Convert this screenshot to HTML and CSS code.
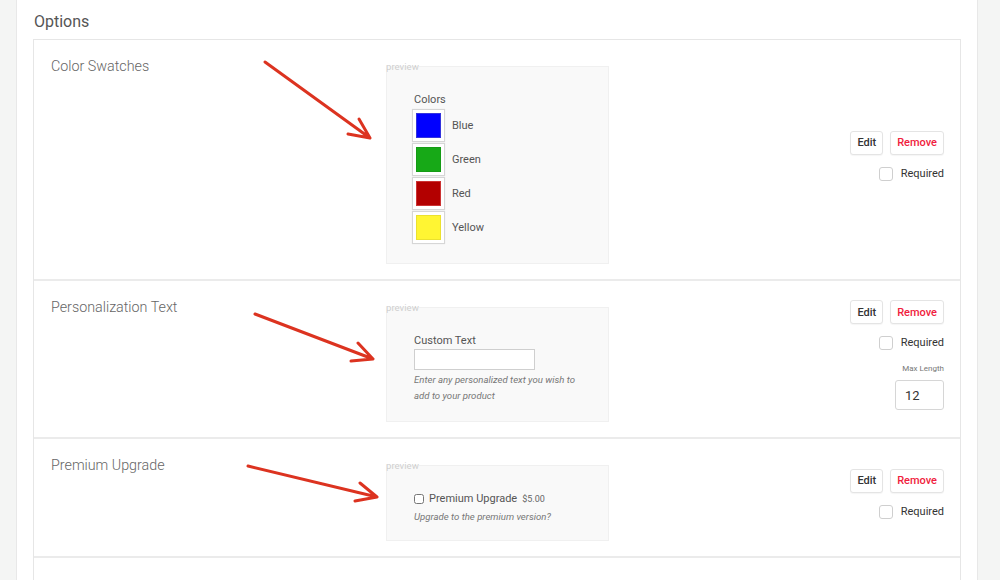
FILE: index.html
```html
<!DOCTYPE html>
<html lang="en">
<head>
    <meta charset="UTF-8">
    <title>Product Options</title>
    <link rel="stylesheet" href="styles.css">
</head>
<body>
    <div class="panel">
        <h2 class="panel-title">Options</h2>
        <div class="options-list">
            <!-- color swatches -->
            <div class="option-row">
                <div class="option-name">Color Swatches</div>
                <fieldset class="preview">
                    <legend>preview</legend>
                    <div class="field-label colors-label">Colors</div>
                    <div class="swatch-row">
                        <span class="swatch"><span class="swatch-fill blue"></span></span>
                        <span class="swatch-label">Blue</span>
                    </div>
                    <div class="swatch-row">
                        <span class="swatch"><span class="swatch-fill green"></span></span>
                        <span class="swatch-label">Green</span>
                    </div>
                    <div class="swatch-row">
                        <span class="swatch"><span class="swatch-fill red"></span></span>
                        <span class="swatch-label">Red</span>
                    </div>
                    <div class="swatch-row">
                        <span class="swatch"><span class="swatch-fill yellow"></span></span>
                        <span class="swatch-label">Yellow</span>
                    </div>
                </fieldset>
                <div class="option-actions">
                    <div class="btn-group">
                        <button class="btn">Edit</button>
                        <button class="btn btn-remove">Remove</button>
                    </div>
                    <label class="required"><span class="check-box"></span>Required</label>
                </div>
            </div>

            <!-- personalization -->
            <div class="option-row">
                <div class="option-name">Personalization Text</div>
                <fieldset class="preview">
                    <legend>preview</legend>
                    <div class="field-label">Custom Text</div>
                    <input type="text" class="text-input">
                    <p class="help-text">Enter any personalized text you wish to add to your product</p>
                </fieldset>
                <div class="option-actions">
                    <div class="btn-group">
                        <button class="btn">Edit</button>
                        <button class="btn btn-remove">Remove</button>
                    </div>
                    <label class="required"><span class="check-box"></span>Required</label>
                    <div class="max-length">
                        <span class="max-label">Max Length</span>
                        <input type="text" class="max-input" value="12">
                    </div>
                </div>
            </div>

            <!-- premium upgrade -->
            <div class="option-row">
                <div class="option-name">Premium Upgrade</div>
                <fieldset class="preview">
                    <legend>preview</legend>
                    <label class="upgrade-line">
                        <input type="checkbox" class="upgrade-check">
                        <span class="upgrade-name">Premium Upgrade</span>
                        <span class="upgrade-price">$5.00</span>
                    </label>
                    <p class="help-text upgrade-help">Upgrade to the premium version?</p>
                </fieldset>
                <div class="option-actions">
                    <div class="btn-group">
                        <button class="btn">Edit</button>
                        <button class="btn btn-remove">Remove</button>
                    </div>
                    <label class="required"><span class="check-box"></span>Required</label>
                </div>
            </div>

            <div class="option-row empty-row"></div>
        </div>
    </div>

    <svg class="arrows" width="1000" height="580" viewBox="0 0 1000 580">
        <g fill="none" stroke="#dc3320" stroke-width="3" stroke-linecap="round" stroke-linejoin="round">
            <path d="M265 62 L370 138 M359 119 L370 138 L348 134"/>
            <path d="M255 314 L373 359 M358 343 L373 359 L351 361"/>
            <path d="M248 466 L377 497 M360 483 L377 497 L355 501"/>
        </g>
    </svg>
</body>
</html>
```

FILE: styles.css
```css
body {
    font-family: Roboto, "Liberation Sans", sans-serif;
    background-color: #f4f5f4;
    margin: 0;
    padding: 0;
    color: #555;
    overflow: hidden;
}
.panel {
    background-color: white;
    margin: 0 22px 0 16px;
    border-left: 1px solid #e8e8e8;
    border-right: 1px solid #e8e8e8;
    padding: 0 16px 0 17px;
    min-height: 580px;
    box-sizing: border-box;
}
.panel-title {
    margin: 0;
    padding: 11px 0 7px;
    font-size: 16px;
    font-weight: 400;
    line-height: 21px;
    color: #555;
}
.options-list {
    border: 1px solid #e6e6e6;
    border-bottom: none;
    margin-left: -1px;
}
.option-row {
    display: grid;
    grid-template-columns: 335px 223px 1fr;
    padding: 16px 16px 15px 17px;
    border-bottom: 2px solid #ebebeb;
}
.empty-row {
    height: 40px;
}
.option-name {
    font-size: 14.3px;
    font-weight: 300;
    line-height: 20px;
    color: #666;
}
.preview {
    margin: 5px 0 0;
    padding: 20px 20px 19px 27px;
    border: 1px solid #f0f0f0;
    background-color: #f9f9f9;
    min-width: 0;
}
.preview legend {
    padding: 0;
    margin-left: -28px;
    font-size: 9.6px;
    line-height: 11px;
    color: #cfcfcf;
}
.field-label {
    font-size: 11px;
    line-height: 16px;
    color: #555;
}
.colors-label {
    margin-bottom: 1px;
}
.swatch-row {
    display: flex;
    align-items: center;
    gap: 7px;
    margin-left: -2px;
    margin-top: 1px;
}
.swatch {
    display: block;
    width: 25px;
    height: 25px;
    padding: 3px;
    background-color: white;
    border: 1px solid #d6d6d6;
    box-shadow: 0 0 1px rgba(0, 0, 0, 0.1);
}
.swatch-fill {
    display: block;
    width: 100%;
    height: 100%;
    box-sizing: border-box;
    border: 1px solid rgba(0, 0, 0, 0.08);
}
.blue { background-color: #0000ff; border-color: #3333dd; }
.green { background-color: #17a917; }
.red { background-color: #b30000; border-color: #c33; }
.yellow { background-color: #fff533; }
.swatch-label {
    font-size: 11px;
    color: #555;
}
.text-input {
    display: block;
    width: 121px;
    height: 21px;
    box-sizing: border-box;
    border: 1px solid #cfcfcf;
    background-color: white;
    margin: 0 0 2px;
}
.help-text {
    margin: 0 0 -2px;
    font-size: 9.6px;
    font-style: italic;
    line-height: 16px;
    color: #777;
    width: 170px;
}
.upgrade-line {
    display: flex;
    align-items: center;
    font-size: 11px;
    line-height: 16px;
}
.upgrade-check {
    width: 10px;
    height: 10px;
    margin: 0 5px 0 0;
}
.upgrade-name {
    color: #555;
}
.upgrade-price {
    font-size: 9px;
    margin-left: 5px;
    color: #666;
}
.upgrade-help {
    margin: 2px 0 -4px;
    width: auto;
}
.option-actions {
    display: flex;
    flex-direction: column;
    align-items: flex-end;
    justify-content: center;
    margin-bottom: 9px;
}
.btn-group {
    display: flex;
    gap: 7px;
}
.btn {
    font-family: Roboto, "Liberation Sans", sans-serif;
    font-size: 11px;
    font-weight: 500;
    height: 24px;
    padding: 0 6px;
    background-color: white;
    border: 1px solid #e4e4e4;
    border-radius: 3px;
    box-shadow: 0 1px 1px rgba(0, 0, 0, 0.04);
    color: #333;
    cursor: pointer;
}
.btn-remove {
    color: #f0213d;
}
.required {
    display: flex;
    align-items: center;
    gap: 8px;
    margin-top: 12px;
    font-size: 11px;
    line-height: 14px;
    color: #333;
}
.check-box {
    display: block;
    width: 12px;
    height: 12px;
    border: 1px solid #cfcfcf;
    border-radius: 3px;
    background-color: white;
}
.max-length {
    display: flex;
    flex-direction: column;
    align-items: flex-end;
    margin-top: 14px;
}
.max-label {
    font-size: 8px;
    line-height: 10px;
    color: #777;
    margin-bottom: 6px;
}
.max-input {
    width: 49px;
    height: 30px;
    box-sizing: border-box;
    border: 1px solid #d6d6d6;
    border-radius: 3px;
    padding: 0 9px;
    font-family: Roboto, "Liberation Sans", sans-serif;
    font-size: 13px;
    color: #333;
}
.arrows {
    position: absolute;
    top: 0;
    left: 0;
    pointer-events: none;
}
```
